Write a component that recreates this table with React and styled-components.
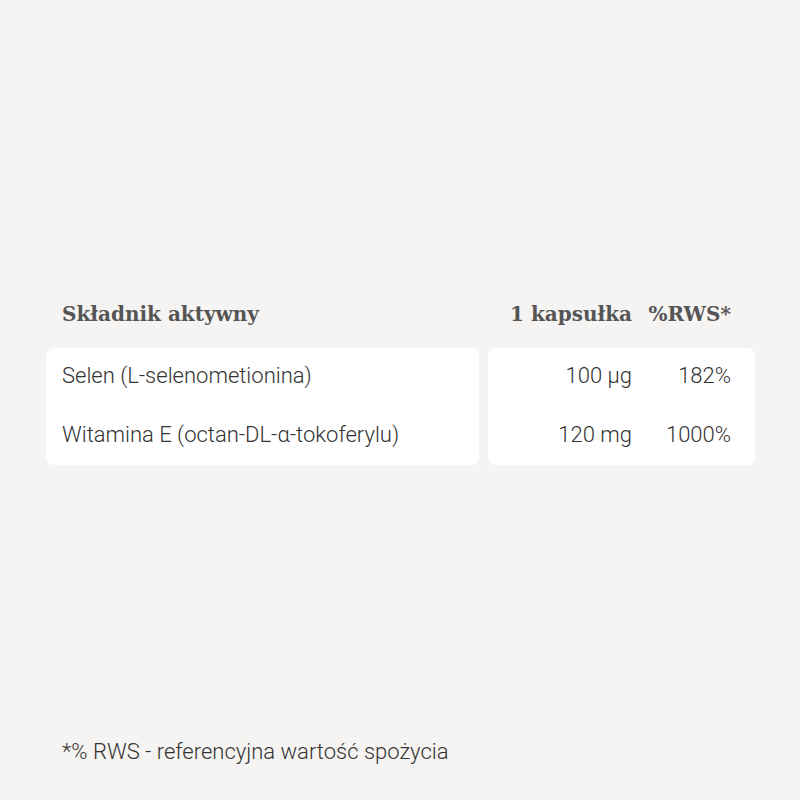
import styled, { createGlobalStyle } from "styled-components";

const GlobalStyle = createGlobalStyle`
    html, body {
        margin: 0;
        padding: 0;
        background: #f5f4f2;
    }
    body {
        font-family: Roboto, "Liberation Sans", sans-serif;
        color: #333;
    }
`

const Page = styled.div`
    width: 800px;
    height: 800px;
    box-sizing: border-box;
    padding: 300px 0 0 46px;
    display: flex;
    flex-direction: column;
`

const Grid = styled.div`
    display: grid;
    grid-template-columns: 433px 267px;
    column-gap: 9px;
`

const Head = styled.div`
    font-family: "DejaVu Serif", "Liberation Serif", serif;
    font-weight: bold;
    font-size: 20px;
    line-height: 28px;
    color: #555;
    margin-bottom: 20px;
    padding-left: ${p => p.$indent ? "16px" : "0"};
`

const Card = styled.div`
    background: #fff;
    border-radius: 8px;
    padding: 10px 0 12px;
    display: flex;
    flex-direction: column;
    gap: 23px;
`

const Values = styled.div`
    display: grid;
    grid-template-columns: 144px 99px;
    padding-right: 24px;
    text-align: right;
`

const Name = styled.div`
    padding-left: 16px;
    height: 36px;
    line-height: 36px;
    font-size: 22px;
    font-weight: 300;
    white-space: nowrap;
`

const Num = styled.div`
    height: 36px;
    line-height: 36px;
    font-size: 22px;
    font-weight: 300;
    white-space: nowrap;
`

const Foot = styled.div`
    margin-top: 273px;
    padding-left: 16px;
    font-size: 22px;
    line-height: 28px;
    font-weight: 300;
    color: #333;
`

const rows = [
    { name: "Selen (L-selenometionina)", amount: "100 µg", rws: "182%" },
    { name: "Witamina E (octan-DL-α-tokoferylu)", amount: "120 mg", rws: "1000%" },
]

export default function App() {
    return <>
        <GlobalStyle />
        <Page>
            <Grid>
                <Head $indent>Składnik aktywny</Head>
                <Head as={Values}>
                    <div>1 kapsułka</div>
                    <div>%RWS*</div>
                </Head>
            </Grid>
            <Grid>
                <Card>
                    {rows.map(r => <Name key={r.name}>{r.name}</Name>)}
                </Card>
                <Card>
                    {rows.map(r => (
                        <Values key={r.name}>
                            <Num>{r.amount}</Num>
                            <Num>{r.rws}</Num>
                        </Values>
                    ))}
                </Card>
            </Grid>
            <Foot>*% RWS - referencyjna wartość spożycia</Foot>
        </Page>
    </>
}
